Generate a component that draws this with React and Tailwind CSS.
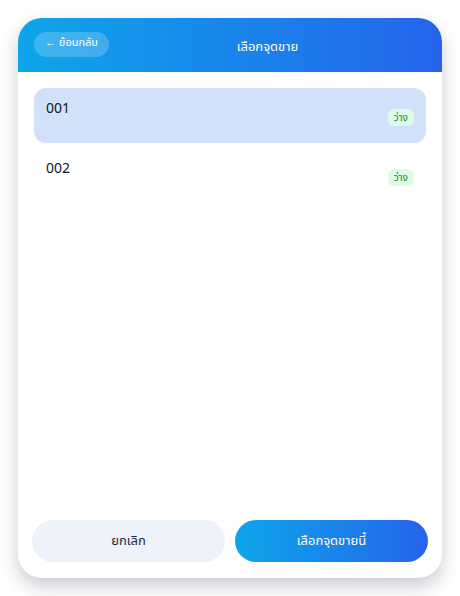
import React, { useState } from "react";

const JUDKAI = [
  { id: "001", status: "ว่าง" },
  { id: "002", status: "ว่าง" },
];

export default function App() {
  const [selected, setSelected] = useState("001");

  return (
    <div
      className="min-h-[596px] w-[460px] bg-white p-[18px]"
      style={{ fontFamily: '"Noto Sans", "Noto Sans Thai", sans-serif' }}
    >
      <div className="flex h-[560px] w-[424px] flex-col overflow-hidden rounded-[24px] bg-white shadow-[0_8px_18px_rgba(15,23,42,0.22)]">
        {/* Header */}
        <div className="flex h-[54px] shrink-0 items-start bg-gradient-to-r from-[#0ea5e9] to-[#2563eb] px-4 pt-[14px]">
          <button className="h-[25px] w-[75px] rounded-full bg-white/20 pb-[6px] text-[11px] leading-[16px] text-white">
            ← ย้อนกลับ
          </button>
          <div className="flex-1 pt-[4px] text-center text-[13px] leading-[20px] text-white">
            เลือกจุดขาย
          </div>
        </div>

        {/* List */}
        <div className="flex flex-1 flex-col gap-[5px] px-4 pt-4">
          {JUDKAI.map((j) => {
            const active = selected === j.id;
            return (
              <div
                key={j.id}
                onClick={() => setSelected(j.id)}
                className={`flex h-[55px] cursor-pointer items-center justify-between rounded-[12px] px-3 ${
                  active ? "bg-[#d0e1f9]" : "bg-transparent"
                }`}
              >
                <div className="flex flex-col self-start pt-[10px]">
                  <div className="text-[14px] leading-5 text-[#0f172a]">{j.id}</div>
                </div>
                <span className="mt-[3px] rounded-[6px] bg-[#dcfce7] px-[6px] py-[1px] text-[10px] leading-[15px] text-[#15803d]">
                  {j.status}
                </span>
              </div>
            );
          })}
        </div>

        {/* Footer */}
        <div className="flex shrink-0 gap-[10px] px-[14px] pb-4">
          <button className="h-[42px] flex-1 rounded-full bg-[#edf2fb] text-[13px] text-[#1e293b]">
            ยกเลิก
          </button>
          <button className="h-[42px] flex-1 rounded-full bg-gradient-to-r from-[#0ea5e9] to-[#2563eb] text-[13px] text-white">
            เลือกจุดขายนี้
          </button>
        </div>
      </div>
    </div>
  );
}
